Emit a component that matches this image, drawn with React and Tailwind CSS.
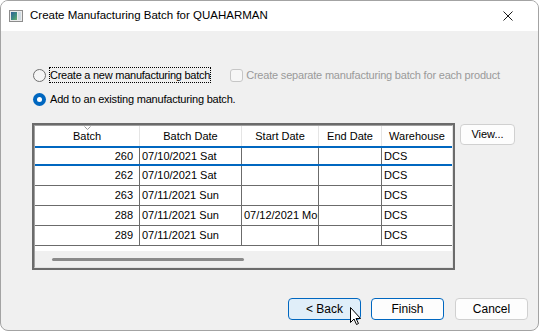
import React from "react";

const cols = [
  { w: "w-[105px]", label: "Batch" },
  { w: "w-[102px]", label: "Batch Date" },
  { w: "w-[77px]", label: "Start Date" },
  { w: "w-[63px]", label: "End Date" },
  { w: "w-[70px]", label: "Warehouse" },
];

const rows = [
  { b: "260", d: "07/10/2021 Sat", s: "", e: "", w: "DCS", sel: true },
  { b: "262", d: "07/10/2021 Sat", s: "", e: "", w: "DCS" },
  { b: "263", d: "07/11/2021 Sun", s: "", e: "", w: "DCS" },
  { b: "288", d: "07/11/2021 Sun", s: "07/12/2021 Mon", e: "", w: "DCS" },
  { b: "289", d: "07/11/2021 Sun", s: "", e: "", w: "DCS" },
];

function Row({ r }) {
  const rowCls = r.sel
    ? "flex h-[20px] border-y-2 border-[#0067c0] bg-white"
    : "flex h-[20px] border-b border-[#6b6b6b] bg-white";
  return (
    <div className={rowCls}>
      <div className="w-[105px] border-r border-[#6b6b6b] flex items-center justify-end pr-[6px]">{r.b}</div>
      <div className="w-[102px] border-r border-[#6b6b6b] flex items-center pl-[2px] overflow-hidden whitespace-nowrap">{r.d}</div>
      <div className="w-[77px] border-r border-[#6b6b6b] flex items-center pl-[2px] overflow-hidden whitespace-nowrap">{r.s}</div>
      <div className="w-[63px] border-r border-[#6b6b6b] flex items-center pl-[2px] overflow-hidden whitespace-nowrap">{r.e}</div>
      <div className="w-[70px] flex items-center pl-[2px] overflow-hidden whitespace-nowrap">{r.w}</div>
    </div>
  );
}

export default function App() {
  return (
    <div className="relative w-[540px] h-[332px] bg-white font-['Liberation_Sans',Arial,sans-serif] text-black">
      <div className="w-[539px] h-[331px] border border-[#a3a3a3] rounded-[8px] overflow-hidden bg-[#f0f0f0] flex flex-col">
        {/* Title bar */}
        <div className="h-[30px] shrink-0 bg-white flex items-center">
          <svg className="ml-[8px]" width="14" height="12" viewBox="0 0 14 12">
            <defs>
              <linearGradient id="g1" x1="0" y1="0" x2="1" y2="1">
                <stop offset="0" stopColor="#2f5f9a" />
                <stop offset="0.6" stopColor="#3f8f7f" />
                <stop offset="1" stopColor="#6fae6a" />
              </linearGradient>
            </defs>
            <rect x="0.5" y="0.5" width="13" height="11" fill="#ececec" stroke="#8c8c8c" />
            <rect x="2" y="2" width="6" height="8" fill="url(#g1)" />
            <rect x="9" y="2" width="3" height="8" fill="#cfdbe2" />
          </svg>
          <span className="ml-[7px] text-[11.5px] whitespace-nowrap">Create Manufacturing Batch for QUAHARMAN</span>
          <svg className="ml-auto mr-[25px]" width="10" height="10" viewBox="0 0 10 10">
            <path d="M0.5 0.5 L9.5 9.5 M9.5 0.5 L0.5 9.5" stroke="#1a1a1a" strokeWidth="1" />
          </svg>
        </div>

        {/* Body */}
        <div className="flex-1 flex flex-col pt-[36px] text-[11px]">
          {/* Row 1 */}
          <div className="h-[16px] flex items-center ml-[32px]">
            <div className="w-[13px] h-[13px] rounded-full border border-[#6f6f6f] bg-[#f5f5f5] shrink-0" />
            <div className="ml-[3px] h-[16px] border border-dotted border-black flex items-center whitespace-nowrap tracking-[-0.25px]">
              Create a new manufacturing batch
            </div>
            <div className="ml-[19px] w-[13px] h-[13px] rounded-[3px] border border-[#c6c6c6] bg-[#f6f6f6] shrink-0" />
            <span className="ml-[3px] text-[#9a9a9a] whitespace-nowrap tracking-[-0.2px]">
              Create separate manufacturing batch for each product
            </span>
          </div>

          {/* Row 2 */}
          <div className="h-[16px] mt-[8px] flex items-center ml-[32px]">
            <div className="w-[13px] h-[13px] rounded-full bg-[#0067c0] flex items-center justify-center shrink-0">
              <div className="w-[5px] h-[5px] rounded-full bg-white" />
            </div>
            <span className="ml-[4px] whitespace-nowrap tracking-[-0.2px]">Add to an existing manufacturing batch.</span>
          </div>

          {/* Grid + View */}
          <div className="mt-[16px] ml-[31px] flex items-start">
            <div className="w-[423px] h-[147px] border-2 border-[#6b6b6b]">
              <div className="w-full h-full border border-t-[#a0a0a0] border-l-[#a0a0a0] border-r-[#e3e3e3] border-b-[#e3e3e3] bg-white flex flex-col">
                {/* Header */}
                <div className="flex h-[20px] bg-white shrink-0">
                  {cols.map((c, i) => (
                    <div
                      key={c.label}
                      className={
                        c.w +
                        " relative flex items-center justify-center whitespace-nowrap " +
                        (i < cols.length - 1 ? "border-r border-[#e5e5e5]" : "")
                      }
                    >
                      {i === 0 && (
                        <svg className="absolute left-[49px] top-[0px]" width="7" height="4" viewBox="0 0 7 4">
                          <path d="M0.5 0.5 L3.5 3.5 L6.5 0.5" stroke="#9a9a9a" fill="none" strokeWidth="1" />
                        </svg>
                      )}
                      {c.label}
                    </div>
                  ))}
                </div>
                {rows.map((r) => (
                  <Row key={r.b} r={r} />
                ))}
                <div className="h-[5px] bg-white shrink-0" />
                <div className="flex-1 bg-[#f0f0f0] flex items-center">
                  <div className="ml-[17px] w-[192px] h-[3px] rounded-full bg-[#8a8a8a]" />
                </div>
              </div>
            </div>
            <button className="ml-[5px] mt-[1px] w-[55px] h-[21px] rounded-[4px] border border-[#d0d0d0] bg-[#fdfdfd] text-[11px] flex items-center justify-center">
              View...
            </button>
          </div>

          {/* Buttons */}
          <div className="mt-[28px] h-[22px] flex justify-end pr-[10px] text-[12px]">
            <button className="w-[73px] h-[22px] rounded-[4px] border border-[#0067c0] bg-[#e0eef9] flex items-center justify-center">
              &lt; Back
            </button>
            <button className="ml-[10px] w-[73px] h-[22px] rounded-[4px] border border-[#0067c0] bg-[#fdfdfd] flex items-center justify-center">
              Finish
            </button>
            <button className="ml-[11px] w-[73px] h-[22px] rounded-[4px] border border-[#d0d0d0] bg-[#fdfdfd] flex items-center justify-center">
              Cancel
            </button>
          </div>
        </div>
      </div>

      {/* Mouse cursor overlay */}
      <svg className="absolute left-[350px] top-[307px]" width="12" height="19" viewBox="0 0 12 19">
        <path d="M0.5 0.5 L0.5 15.5 L4 12 L6.5 17.5 L8.5 16.5 L6 11.5 L10.5 11.5 Z" fill="#ffffff" stroke="#000000" strokeWidth="1" />
      </svg>
    </div>
  );
}
